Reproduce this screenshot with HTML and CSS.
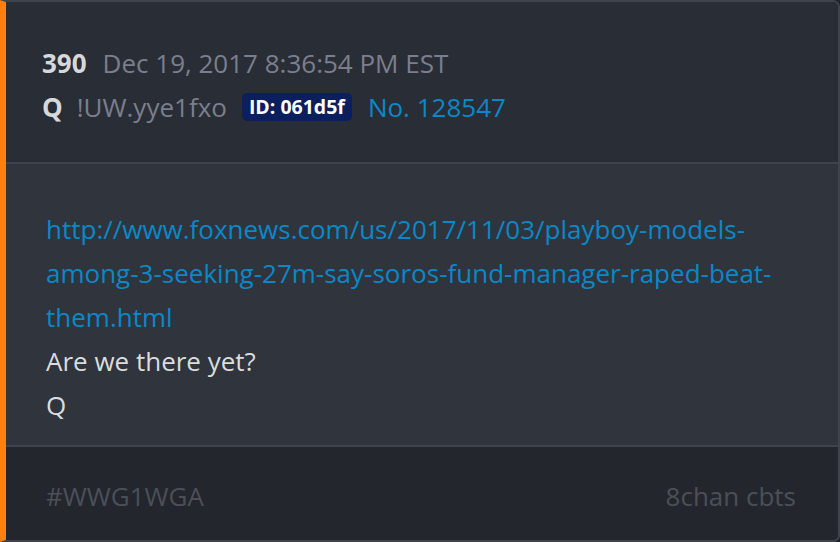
FILE: index.html
```html
<!DOCTYPE html>
<html>
<head>
<meta charset="utf-8">
<link rel="stylesheet" href="styles.css">
</head>
<body>
<div class="card">
  <div class="head">
    <div class="row"><span class="num">390</span><span class="date">Dec 19, 2017 8:36:54 PM EST</span></div>
    <div class="row"><span class="num num-q">Q</span><span class="trip">!UW.yye1fxo</span><span class="badge">ID: 061d5f</span><span class="no">No. 128547</span></div>
  </div>
  <div class="body">
    <a class="link" href="#">http://www.foxnews.com/us/2017/11/03/playboy-models-among-3-seeking-27m-say-soros-fund-manager-raped-beat-them.html</a>
    <div class="line">Are we there yet?</div>
    <div class="line">Q</div>
  </div>
  <div class="foot">
    <span>#WWG1WGA</span>
    <span>8chan cbts</span>
  </div>
</div>
</body>
</html>
```
FILE: styles.css
```css
html, body { margin: 0; padding: 0; background: #1f2228; }
body { font-family: "Open Sans", "Noto Sans", sans-serif; font-size: 26px; }
.card {
  width: 840px; height: 542px; box-sizing: border-box;
  border: 2px solid #3e434c; border-left: 6px solid #ff7f11;
  border-radius: 0 7px 7px 0;
  overflow: hidden;
  display: flex; flex-direction: column;
}
.head {
  background: #292d35;
  padding: 39px 40px 33px 36px;
  border-bottom: 2px solid #3e434c;
}
.row { display: flex; align-items: center; height: 44px; }
.num { font-weight: 700; color: #d7d8da; margin-right: 16px; }
.num-q { margin-right: 14px; }
.date, .trip { color: #7b7f8d; }
.trip { margin-right: 15px; }
.badge {
  background: #0b1e5e; color: #fff; font-weight: 700; font-size: 19.5px;
  padding: 0 7px; border-radius: 5px; line-height: 28px; margin-right: 16px;
}
.no { color: #0a88c8; }
.body {
  background: #2f343d;
  padding: 43px 40px 18px 40px;
  border-bottom: 2px solid #3e434c;
  line-height: 44px;
}
.link { color: #0a88c8; text-decoration: none; display: block; }
.line { color: #dcdcdc; }
.foot {
  flex: 1;
  background: #23262d;
  padding: 27px 42px 0 40px;
  display: flex; justify-content: space-between;
  color: #4b5058; line-height: 44px;
}
```
